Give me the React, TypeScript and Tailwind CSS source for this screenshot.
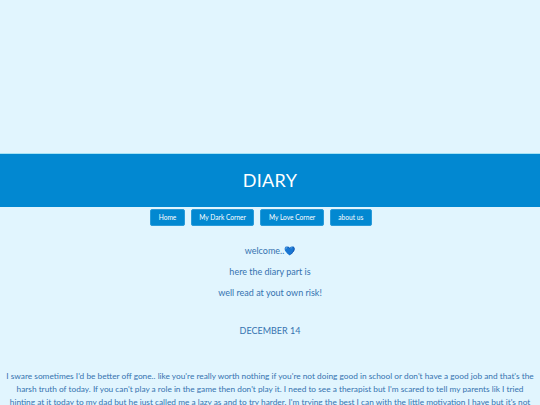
import React from 'react';

const links = ['Home', 'My Dark Corner', 'My Love Corner', 'about us'];

const App: React.FC = () => {
  return (
    <div
      className="min-h-screen bg-[#e1f5fe] text-[#3573b0]"
      style={{ fontFamily: 'Lato, "Liberation Sans", sans-serif' }}
    >
      {/* empty top area */}
      <div className="h-[153px]" />

      {/* header */}
      <header className="h-[54px] bg-[#0288d1] border-t border-[#a6e3f5] flex items-center justify-center">
        <h1 className="text-[18px] text-white tracking-[0.3px]">DIARY</h1>
      </header>

      {/* nav */}
      <nav className="flex justify-center gap-[6px] mt-[2px] pr-[18px]">
        {links.map((l) => (
          <a
            key={l}
            href="#"
            className="h-[17px] px-[7.5px] flex items-center bg-[#0288d1] border border-[#2a9bd9] rounded-[2px] text-white text-[6.6px]"
          >
            {l}
          </a>
        ))}
      </nav>

      {/* intro */}
      <div className="flex flex-col items-center text-[9px] mt-[14px]">
        <p className="h-[21px] flex items-center">
          welcome..<span className="text-[#1565c0] text-[9px]">💙</span>
        </p>
        <p className="h-[21px] flex items-center">here the diary part is</p>
        <p className="h-[21px] flex items-center">well read at yout own risk!</p>
        <p className="h-[21px] flex items-center mt-[17px]">DECEMBER 14</p>
      </div>

      {/* entry */}
      <p className="mt-[29px] px-[3px] text-center text-[8.3px] leading-[13px]">
        I sware sometimes I'd be better off gone.. like you're really worth nothing if you're not doing good in school or
        don't have a good job and that's the harsh truth of today. If you can't play a role in the game then don't play it.
        I need to see a therapist but I'm scared to tell my parents lik I tried hinting at it today to my dad but he just
        called me a lazy as and to try harder. I'm trying the best I can with the little motivation I have but it's not
        enough for them.
      </p>
    </div>
  );
};

export default App;
